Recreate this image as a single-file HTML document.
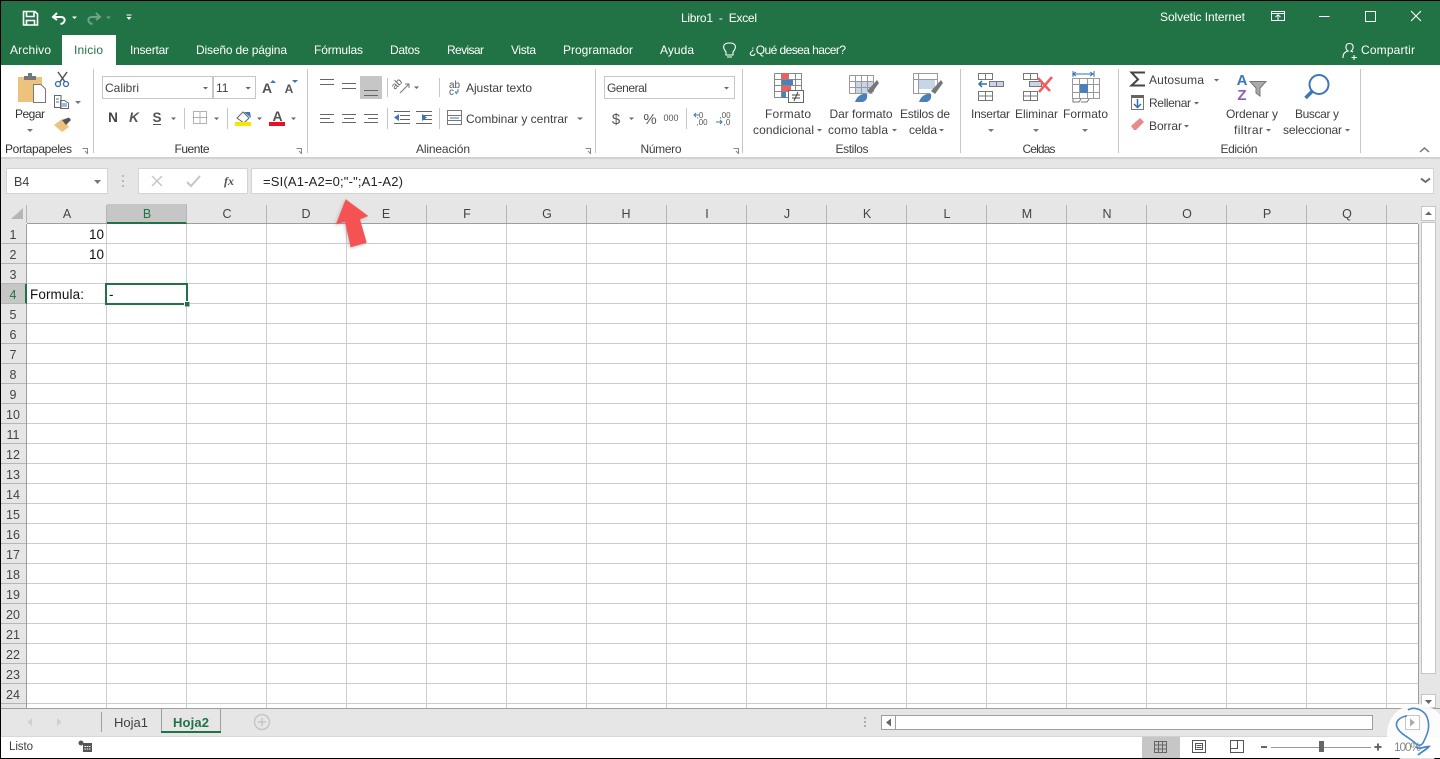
<!DOCTYPE html>
<html><head><meta charset="utf-8"><title>Libro1 - Excel</title>
<style>
html,body{margin:0;padding:0;background:#fff;overflow:hidden}
svg{display:block;position:absolute;left:0;top:0}
text{font-family:"Liberation Sans",sans-serif;font-size:12px;fill:#3f3f3f}
.c{text-anchor:middle}
.r{text-anchor:end}
.h{fill:#444;font-size:12.5px;text-anchor:middle}
.d{fill:#111;font-size:13.5px}
</style></head><body>
<svg width="1440" height="759" viewBox="0 0 1440 759" xmlns="http://www.w3.org/2000/svg">
<defs>
<pattern id="g" x="27" y="224" width="80" height="20" patternUnits="userSpaceOnUse"><path d="M79.500 0V20M0 19.500H80" stroke="#cdcdcd" fill="none"/></pattern>
<filter id="sh" x="-30%" y="-30%" width="160%" height="160%"><feGaussianBlur stdDeviation="1.5"/></filter>
</defs>
<rect width="1440" height="759" fill="#fff"/>
<!-- title bar -->
<rect x="0" y="0" width="1440" height="65" fill="#217346"/>
<rect x="0" y="0" width="1440" height="1" fill="#000"/>
<rect x="62" y="35" width="54" height="31" fill="#fff"/>
<!-- QAT -->
<path d="M23.500 11.500H35L37.500 14V25H23.500Z M26.500 12V16.500H34V12 M26.500 25V20.500H34.500V25" fill="none" stroke="#fff" stroke-width="1.600"/>
<path d="M57 13L53 17L57 20 M53.500 17H61C66 17 66 23 60.500 24" fill="none" stroke="#fff" stroke-width="2"/>
<path d="M72 16.500H77L74.500 19Z" fill="#fff"/>
<path d="M96 13L100 17L96 20 M99.500 17H92C87 17 87 23 92.500 24" fill="none" stroke="#6ea489" stroke-width="2"/>
<path d="M106 16.500H111L108.500 19Z" fill="#6ea489"/>
<path d="M126.500 14.500H131.500V15.500H126.500Z M126.500 17H131.500L129 20Z" fill="#fff"/>
<text x="681" y="22" style="fill:#fff" textLength="76">Libro1 &#160;-&#160; Excel</text>
<text x="1160" y="21" style="fill:#fff" textLength="85">Solvetic Internet</text>
<path d="M1271.500 11.500H1284.500V20.500H1271.500ZM1271.500 13.500H1284.500M1278 20V15M1275.500 17L1278 14.800L1280.500 17" fill="none" stroke="#fff"/>
<rect x="1319" y="16" width="10.500" height="1" fill="#fff"/>
<rect x="1365.500" y="11.500" width="10" height="10" fill="none" stroke="#fff"/>
<path d="M1411 11L1421 21M1421 11L1411 21" stroke="#fff" stroke-width="1.100"/>
<!-- tabs -->
<text x="10" y="54" style="fill:#fff" textLength="41">Archivo</text>
<text x="74" y="54" style="fill:#217346" textLength="29">Inicio</text>
<text x="130" y="54" style="fill:#fff" textLength="39">Insertar</text>
<text x="196" y="54" style="fill:#fff" textLength="91">Diseño de página</text>
<text x="314" y="54" style="fill:#fff" textLength="49">Fórmulas</text>
<text x="390" y="54" style="fill:#fff" textLength="30">Datos</text>
<text x="447" y="54" style="fill:#fff" textLength="37">Revisar</text>
<text x="511" y="54" style="fill:#fff" textLength="25">Vista</text>
<text x="563" y="54" style="fill:#fff" textLength="70">Programador</text>
<text x="660" y="54" style="fill:#fff" textLength="34">Ayuda</text>
<text x="749" y="54" style="fill:#fff" textLength="97">¿Qué desea hacer?</text>
<text x="1361" y="54" style="fill:#fff" textLength="54">Compartir</text>
<path d="M726 52C722 47 723 43 729.500 43C736 43 737 47 733 52V55H726ZM727 57H732" fill="none" stroke="#fff" stroke-width="1.100"/>
<path d="M1343 58C1343 53 1345 52 1348 51C1345 49 1345 43.500 1349.500 43.500C1354 43.500 1354 49 1351 51L1353 52M1354 55V60M1351.500 57.500H1357" fill="none" stroke="#fff" stroke-width="1.100"/>
<!-- ribbon -->
<rect x="0" y="65" width="1440" height="92" fill="#fff"/>
<rect x="0" y="157" width="1440" height="2" fill="#d2d2d2"/>
<path d="M93.500 69V153M307.500 69V153M595.500 69V153M742.500 69V153M960.500 69V153M1118.500 69V153M1360.500 69V153" stroke="#c6c6c6"/>
<!-- clipboard -->
<path d="M18 77H42V102H18Z" fill="#edc27d"/>
<path d="M24 76H36V80H24ZM28 73H32V76H28Z" fill="#777"/>
<path d="M33.500 84.500H41L45.500 89V102.500H33.500Z" fill="#fff" stroke="#777"/>
<text x="30" y="118" class="c" style="fill:#333" textLength="30">Pegar</text>
<path d="M27 129H33L30 132Z" fill="#777"/>
<!-- scissors -->
<path d="M58 72L65 82M67 72L60 82" stroke="#555" stroke-width="1.500"/>
<circle cx="58" cy="84" r="2.500" fill="none" stroke="#2f6fb0" stroke-width="1.300"/><circle cx="66" cy="84" r="2.500" fill="none" stroke="#2f6fb0" stroke-width="1.300"/>
<!-- copy -->
<path d="M54.500 95.500H61V107.500H54.500ZM60.500 100.500H64.500L68.500 103V108.500H60.500Z" fill="#fff" stroke="#666"/>
<path d="M56 99H59M56 102H59M62 104H67M62 106H67" stroke="#3b78b5"/>
<path d="M75 101H81L78 104Z" fill="#777"/>
<!-- brush -->
<path d="M54 125L62 119L69 127L62 132Z" fill="#edc27d"/>
<path d="M62 120L69 117.500L71 120L66 125Z" fill="#555"/>
<!-- font -->
<rect x="102.500" y="76.500" width="110" height="22" fill="#fff" stroke="#c6c6c6"/>
<rect x="213.500" y="76.500" width="42" height="22" fill="#fff" stroke="#c6c6c6"/>
<text x="105" y="92" textLength="34">Calibri</text><text x="216" y="92">11</text>
<path d="M203 87H208L205.500 89.500ZM245.500 87H251L248 89.500Z" fill="#666"/>
<text x="267" y="93" class="c" style="font-size:14px;font-weight:700;fill:#555">A</text>
<path d="M270 83H276L273 80Z" fill="#3b78b5"/>
<text x="289" y="93" class="c" style="font-size:12px;font-weight:700;fill:#555">A</text>
<path d="M292 80H298L295 83Z" fill="#3b78b5"/>
<text x="113" y="122" class="c" style="font-weight:700;fill:#444;font-size:13.500px">N</text>
<text x="134" y="122" class="c" style="font-weight:700;font-style:italic;fill:#555;font-size:13.500px">K</text>
<text x="157" y="122" class="c" style="font-weight:700;fill:#555;font-size:13.500px">S</text>
<rect x="153" y="124" width="8" height="1" fill="#555"/>
<path d="M171 117.500H176L173.500 120ZM214 117.500H219L216.500 120ZM257 117.500H262L259.500 120ZM291 117.500H296L293.500 120Z" fill="#666"/>
<path d="M184.500 108V129" stroke="#c6c6c6"/><path d="M227.500 108V129" stroke="#c6c6c6"/>
<path d="M193.500 111.500H206.500V123.500H193.500ZM200 111.500V123.500M193.500 117.500H206.500" fill="none" stroke="#666" stroke-dasharray="1 1"/>
<path d="M237 118L243 112L249 118L244 123Z" fill="#fff" stroke="#666"/><path d="M244 112L250 112L251 118Z" fill="#3b78b5"/>
<rect x="235" y="122" width="16" height="4" fill="#f5e800"/>
<text x="277.500" y="121" class="c" style="font-size:14px;font-weight:700;fill:#555">A</text>
<rect x="269" y="122" width="16" height="4" fill="#e81123"/>
<!-- alignment -->
<rect x="360" y="76" width="22" height="23" fill="#c6c6c6"/>
<path d="M320 79.500H334M320 84.500H334M342 83.500H356M342 88.500H356M364 90.500H378M364 95.500H378M320 114.500H334M320 118.500H330M320 122.500H334M342 114.500H356M344 118.500H354M342 122.500H356M364 114.500H378M368 118.500H378M364 122.500H378" stroke="#666" fill="none"/>
<path d="M387.500 78V97M387.500 108V129" stroke="#c6c6c6"/>
<text x="395" y="90" transform="rotate(-45 395 90)" style="font-size:10px;fill:#555">ab</text>
<path d="M400 93L409 84M405 84H409V88" stroke="#777" fill="none"/>
<path d="M414 86.500H419L416.500 89Z" fill="#666"/>
<path d="M394 111.500H410M400 115.500H410M400 119.500H410M394 123.500H410M416 111.500H432M422 115.500H432M422 119.500H432M416 123.500H432" stroke="#666" fill="none"/>
<path d="M394 117.500L399 114V121ZM422 114L427 117.500L422 121Z" fill="#3b78b5"/>
<path d="M439.500 78V97M439.500 108V129" stroke="#c6c6c6"/>
<text x="449" y="88" style="font-size:10px;fill:#555">ab</text>
<text x="449" y="95" style="font-size:10px;fill:#555">c</text>
<path d="M455 92H458V89M457 94L455 92" stroke="#3b78b5" fill="none"/>
<text x="466" y="92" textLength="66">Ajustar texto</text>
<path d="M447.500 110.500H461.500V124.500H447.500ZM447.500 115.500H461.500M447.500 120.500H461.500" fill="none" stroke="#777"/>
<path d="M450 118H459" stroke="#3b78b5"/>
<text x="466" y="123" textLength="102">Combinar y centrar</text>
<path d="M577 117.500H583L580 120Z" fill="#666"/>
<text x="443" y="153" class="c" textLength="54">Alineación</text>
<path d="M585.500 148.500H590.500V153.500M588 151L591 154" stroke="#888" fill="none"/>
<!-- Numero -->
<rect x="604.500" y="76.500" width="130" height="22" fill="#fff" stroke="#c6c6c6"/>
<text x="607" y="92" textLength="40">General</text>
<path d="M724 87H729L726.500 89.500Z" fill="#666"/>
<text x="616" y="124" class="c" style="font-size:15px;fill:#555">$</text>
<path d="M629 117.500H634L631.500 120Z" fill="#666"/>
<text x="650" y="124" class="c" style="font-size:15px;fill:#555">%</text>
<text x="671" y="121" class="c" style="font-size:9px;fill:#555">000</text>
<path d="M686.500 108V129" stroke="#c6c6c6"/>
<text x="700" y="118" class="c" style="font-size:8px;fill:#555">,0</text><text x="702" y="125" class="c" style="font-size:8px;fill:#555">,00</text>
<text x="725" y="118" class="c" style="font-size:8px;fill:#555">,00</text><text x="727" y="125" class="c" style="font-size:8px;fill:#555">,0</text>
<path d="M694 115H699M696 113L694 115L696 117" stroke="#3b78b5" fill="none"/>
<path d="M716 122H722M720 120L722 122L720 124" stroke="#3b78b5" fill="none"/>
<text x="661" y="153" class="c" textLength="41">Número</text>
<path d="M733.500 148.500H738.500V153.500M736 151L739 154" stroke="#888" fill="none"/>
<path d="M82.500 148.500H87.500V153.500M85 151L88 154" stroke="#888" fill="none"/>
<path d="M296.500 148.500H301.500V153.500M299 151L302 154" stroke="#888" fill="none"/>
<!-- Estilos -->
<path d="M774.500 73.500H801.500V93M774.500 73.500V97.500H788M781.500 73.500V97.500M788.500 73.500V90M795.500 73.500V90M774.500 79.500H801.500M774.500 85.500H801.500M774.500 91.500H788" fill="none" stroke="#888"/>
<rect x="782" y="73" width="6" height="6" fill="#f45c5c"/>
<rect x="782" y="80" width="11" height="5" fill="#4b80ba"/>
<rect x="782" y="86" width="9" height="5" fill="#f45c5c"/>
<rect x="782" y="92" width="4" height="6" fill="#4b80ba"/>
<rect x="788.500" y="90.500" width="15" height="12" fill="#fff" stroke="#666"/>
<path d="M792 95H800M792 98H800M794 101L798 92" stroke="#444" fill="none"/>
<text x="788" y="118" class="c" textLength="46">Formato</text>
<text x="753" y="134" textLength="61">condicional</text>
<path d="M817 129H822L819.500 131.500ZM892 129H897L894.500 131.500ZM939 129H944L941.500 131.500Z" fill="#666"/>
<rect x="856" y="81" width="17" height="13" fill="#c6d5e8"/>
<path d="M849.500 75.500H873.500V92M849.500 75.500V93.500H866M849.500 81.500H873.500M849.500 87.500H870M855.500 75.500V93.500M861.500 75.500V93.500M867.500 75.500V90" fill="none" stroke="#999"/>
<path d="M867 91L877 80L879 83L871 94Z" fill="#777"/>
<path d="M855 102C857 96 862 93 867 94C868 98 866 101 863 102Z" fill="#4b80ba"/>
<text x="861" y="118" class="c" textLength="63">Dar formato</text>
<text x="828" y="134" textLength="60">como tabla</text>
<rect x="918" y="79" width="17" height="10" fill="#c6d5e8"/>
<path d="M913.500 73.500H937.500V90M913.500 73.500V93.500H930M913.500 79.500H937.500M918.500 73.500V93.500" fill="none" stroke="#999"/>
<path d="M931 91L941 80L943 83L935 94Z" fill="#777"/>
<path d="M919 102C921 96 926 93 931 94C932 98 930 101 927 102Z" fill="#4b80ba"/>
<text x="925" y="118" class="c" textLength="50">Estilos de</text>
<text x="909" y="134" textLength="28">celda</text>
<text x="852" y="153" class="c" textLength="33">Estilos</text>
<!-- Celdas -->
<path d="M978.500 73.500H992.500V79.500H978.500ZM985.500 73.500V79.500M978.500 91.500H992.500V100.500H978.500ZM985.500 91.500V100.500M978.500 96H992.500" fill="none" stroke="#777"/>
<path d="M989.500 81.500H1003.500V86.500H989.500ZM996.500 81.500V86.500" fill="#c6d5e8" stroke="#777"/>
<path d="M979 84H987M982 81L979 84L982 87" stroke="#2f6fb0" stroke-width="1.500" fill="none"/>
<text x="971" y="118" textLength="39">Insertar</text>
<path d="M1023.500 73.500H1037.500V79.500H1023.500ZM1030.500 73.500V79.500M1023.500 91.500H1037.500V100.500H1023.500ZM1030.500 91.500V100.500M1023.500 96H1037.500" fill="none" stroke="#777"/>
<path d="M1029.500 81.500H1041.500V86.500H1029.500Z" fill="#c6d5e8" stroke="#777"/>
<path d="M1038 78L1050 91M1052 77L1039 92" stroke="#f45c5c" stroke-width="2.500"/>
<text x="1015" y="118" textLength="43">Eliminar</text>
<path d="M1073 74H1093M1073 71V77M1094 71V77M1076 72L1073 74L1076 76M1090 72L1093 74L1090 76" stroke="#2f6fb0" fill="none"/>
<path d="M1072.500 78.500H1099.500V98.500H1072.500ZM1072.500 84.500H1099.500M1072.500 92.500H1099.500M1079.500 78.500V98.500M1087.500 78.500V98.500M1093.500 78.500V98.500" fill="none" stroke="#999"/>
<rect x="1080" y="84" width="8" height="9" fill="#4b80ba"/>
<path d="M1073 99V102H1079L1081 99M1081 102H1087L1089 99" fill="none" stroke="#777"/>
<text x="1063" y="118" textLength="45">Formato</text>
<path d="M988 129H994L991 132ZM1033 129H1039L1036 132ZM1082 129H1088L1085 132Z" fill="#777"/>
<text x="1039" y="153" class="c" textLength="33">Celdas</text>
<!-- Edicion -->
<path d="M1145 72.500H1131.500L1138 79.500L1131.500 85.500H1145" fill="none" stroke="#444" stroke-width="2"/>
<text x="1149" y="84" textLength="55">Autosuma</text>
<path d="M1214 79H1219L1216.500 81.500Z" fill="#666"/>
<rect x="1131.500" y="95.500" width="12" height="14" fill="#fff" stroke="#777"/><rect x="1131" y="95" width="13" height="3" fill="#666"/>
<path d="M1137.500 99V107M1134 104L1137.500 107.500L1141 104" stroke="#2f6fb0" stroke-width="1.500" fill="none"/>
<text x="1149" y="107" textLength="42">Rellenar</text>
<path d="M1194 102H1199L1196.500 104.500ZM1184 125H1189L1186.500 127.500Z" fill="#666"/>
<path d="M1131 126L1140 118L1144 122L1136 130H1134Z" fill="#e88a8a"/>
<text x="1149" y="130" textLength="33">Borrar</text>
<text x="1242" y="85" class="c" style="font-size:15px;font-weight:700;fill:#3b78b5">A</text>
<text x="1242" y="100" class="c" style="font-size:15px;font-weight:700;fill:#8a5fb5">Z</text>
<path d="M1250 81.500H1266L1260 88V96L1256 93V88Z" fill="#aaa" stroke="#777"/>
<text x="1252" y="118" class="c" textLength="52">Ordenar y</text>
<text x="1234" y="134" textLength="29">filtrar</text>
<path d="M1266 129H1271L1268.500 131.500ZM1345 129H1350L1347.500 131.500Z" fill="#666"/>
<circle cx="1319" cy="84.500" r="9.500" fill="none" stroke="#3b78b5" stroke-width="2"/>
<path d="M1312 91.500L1305.500 98" stroke="#3b78b5" stroke-width="3.500"/>
<text x="1317" y="118" class="c" textLength="44">Buscar y</text>
<text x="1283" y="134" textLength="59">seleccionar</text>
<text x="1239" y="153" class="c" textLength="37">Edición</text>
<text x="38.500" y="153" class="c" textLength="67" style="fill:#333">Portapapeles</text>
<text x="192" y="153" class="c" textLength="35" style="fill:#333">Fuente</text>
<path d="M1420 152L1424.500 148L1429 152" fill="none" stroke="#777" stroke-width="1.500"/>
<!-- formula bar -->
<rect x="0" y="159" width="1440" height="45" fill="#e6e6e6"/>
<rect x="6.500" y="168.500" width="101" height="25" fill="#fff" stroke="#d4d4d4"/>
<text x="14" y="186" style="font-size:12.500px">B4</text>
<path d="M94 180H101L97.500 184Z" fill="#777"/>
<path d="M123 175V177M123 180V182M123 185V187" stroke="#aaa" stroke-width="1.500"/>
<rect x="138.500" y="168.500" width="109" height="25" fill="#fff" stroke="#d4d4d4"/>
<path d="M152 176L162 186M162 176L152 186" stroke="#c6c6c6" stroke-width="1.500"/>
<path d="M187 182L191 186L200 176" stroke="#c6c6c6" stroke-width="2" fill="none"/>
<text x="229" y="185" class="c" style="font-family:'Liberation Serif',serif;font-style:italic;font-weight:700;font-size:12px;fill:#555">fx</text>
<rect x="251.500" y="168.500" width="1182" height="25" fill="#fff" stroke="#d4d4d4"/>
<text x="263" y="186" style="font-size:13px;fill:#222" textLength="140">=SI(A1-A2=0;"-";A1-A2)</text>
<path d="M1421 178.500L1425.500 182L1430 178.500" fill="none" stroke="#666" stroke-width="1.800"/>
<!-- grid -->
<rect x="1" y="204" width="1439" height="504" fill="#fff"/>
<rect x="27" y="224" width="1391" height="484" fill="url(#g)"/>
<!-- col headers -->
<rect x="1" y="204" width="1418" height="19" fill="#e6e6e6"/>
<rect x="107" y="204" width="80" height="18" fill="#c6c6c6"/>
<rect x="107" y="222" width="80" height="2" fill="#217346"/>
<rect x="27" y="223" width="80" height="1" fill="#9e9e9e"/><rect x="187" y="223" width="1231" height="1" fill="#9e9e9e"/>
<path d="M26.500 205V223M106.500 205V223M186.500 205V223M266.500 205V223M346.500 205V223M426.500 205V223M506.500 205V223M586.500 205V223M666.500 205V223M746.500 205V223M826.500 205V223M906.500 205V223M986.500 205V223M1066.500 205V223M1146.500 205V223M1226.500 205V223M1306.500 205V223M1386.500 205V223" stroke="#b5b5b5"/>
<path d="M23 208V219H11Z" fill="#b5b5b5"/>
<text class="h" x="67" y="218">A</text><text class="h" x="147" y="218" style="fill:#217346">B</text><text class="h" x="227" y="218">C</text><text class="h" x="306" y="218">D</text><text class="h" x="386" y="218">E</text><text class="h" x="467" y="218">F</text><text class="h" x="547" y="218">G</text><text class="h" x="626" y="218">H</text><text class="h" x="707" y="218">I</text><text class="h" x="787" y="218">J</text><text class="h" x="867" y="218">K</text><text class="h" x="947" y="218">L</text><text class="h" x="1027" y="218">M</text><text class="h" x="1107" y="218">N</text><text class="h" x="1187" y="218">O</text><text class="h" x="1267" y="218">P</text><text class="h" x="1347" y="218">Q</text>
<!-- row headers -->
<rect x="1" y="223" width="25" height="485" fill="#e6e6e6"/>
<rect x="1" y="284" width="25" height="20" fill="#c6c6c6"/>
<rect x="25" y="284" width="2" height="20" fill="#217346"/>
<rect x="26" y="224" width="1" height="60" fill="#9e9e9e"/><rect x="26" y="304" width="1" height="404" fill="#9e9e9e"/>
<path d="M1 243.500H26M1 263.500H26M1 283.500H26M1 303.500H26M1 323.500H26M1 343.500H26M1 363.500H26M1 383.500H26M1 403.500H26M1 423.500H26M1 443.500H26M1 463.500H26M1 483.500H26M1 503.500H26M1 523.500H26M1 543.500H26M1 563.500H26M1 583.500H26M1 603.500H26M1 623.500H26M1 643.500H26M1 663.500H26M1 683.500H26M1 703.500H26" stroke="#b5b5b5"/>
<text class="h" x="13" y="239">1</text><text class="h" x="13" y="259">2</text><text class="h" x="13" y="279">3</text><text class="h" x="13" y="299" style="fill:#217346">4</text><text class="h" x="13" y="319">5</text><text class="h" x="13" y="339">6</text><text class="h" x="13" y="359">7</text><text class="h" x="13" y="379">8</text><text class="h" x="13" y="399">9</text><text class="h" x="13" y="419">10</text><text class="h" x="13" y="439">11</text><text class="h" x="13" y="459">12</text><text class="h" x="13" y="479">13</text><text class="h" x="13" y="499">14</text><text class="h" x="13" y="519">15</text><text class="h" x="13" y="539">16</text><text class="h" x="13" y="559">17</text><text class="h" x="13" y="579">18</text><text class="h" x="13" y="599">19</text><text class="h" x="13" y="619">20</text><text class="h" x="13" y="639">21</text><text class="h" x="13" y="659">22</text><text class="h" x="13" y="679">23</text><text class="h" x="13" y="699">24</text>
<!-- cells -->
<text class="d r" x="104" y="239">10</text>
<text class="d r" x="104" y="259">10</text>
<text class="d" x="30" y="299" textLength="54">Formula:</text>
<text class="d" x="109" y="299">-</text>
<rect x="106" y="284" width="81" height="20" fill="none" stroke="#217346" stroke-width="2"/>
<rect x="184" y="301" width="6" height="6" fill="#fff"/>
<rect x="185" y="302" width="4.500" height="4.500" fill="#217346"/>
<!-- v scroll -->
<rect x="1418" y="204" width="22" height="504" fill="#e6e6e6"/>
<rect x="1418" y="224" width="1" height="484" fill="#9e9e9e"/>
<rect x="1421.500" y="206.500" width="14" height="14" fill="#fff" stroke="#c6c6c6"/>
<path d="M1425 215H1432L1428.500 211.500Z" fill="#666"/>
<rect x="1421.500" y="222.500" width="14" height="451" fill="#fff" stroke="#c6c6c6"/>
<rect x="1421.500" y="694.500" width="14" height="13" fill="#fff" stroke="#c6c6c6"/>
<path d="M1425 700H1432L1428.500 704Z" fill="#666"/>
<!-- sheet bar -->
<rect x="1" y="708" width="1439" height="28" fill="#e6e6e6"/>
<rect x="1" y="708" width="1439" height="1" fill="#9e9e9e"/>
<path d="M32 718V726L27.500 722ZM57 718V726L61.500 722Z" fill="#d0d0d0"/>
<path d="M101.500 712V732" stroke="#9e9e9e"/>
<text x="114" y="727" style="font-size:13px" textLength="34">Hoja1</text>
<path d="M161.500 709V731M220.500 709V731" stroke="#9e9e9e"/>
<rect x="162" y="709" width="58" height="22" fill="#e6e6e6"/>
<rect x="161" y="731" width="60" height="2" fill="#217346"/>
<text x="173" y="727" style="font-size:13px;font-weight:700;fill:#217346" textLength="36">Hoja2</text>
<circle cx="262" cy="722" r="7.500" fill="none" stroke="#c6c6c6" stroke-width="1.500"/>
<path d="M258 722H266M262 718V726" stroke="#c6c6c6" stroke-width="1.500"/>
<path d="M865 717V719M865 721V723M865 725V727" stroke="#999" stroke-width="1.500"/>
<rect x="881.500" y="715.500" width="14" height="14" fill="#fff" stroke="#9e9e9e"/>
<path d="M891 718.500V726.500L886 722.500Z" fill="#666"/>
<rect x="895.500" y="715.500" width="477" height="14" fill="#fff" stroke="#9e9e9e"/>
<!-- status -->
<rect x="0" y="736" width="1440" height="22" fill="#fff"/>
<rect x="0" y="736" width="1440" height="1" fill="#d8d8d8"/>
<rect x="0" y="758" width="1440" height="1" fill="#000"/>
<rect x="0" y="0" width="1" height="759" fill="#000"/>
<text x="9" y="750" textLength="24" style="font-size:11.500px">Listo</text>
<circle cx="81" cy="743" r="2.500" fill="#555"/>
<rect x="83" y="743" width="9" height="9" fill="#555"/>
<path d="M84.500 746.500H91M84.500 749H91" stroke="#fff" stroke-dasharray="1.500 .7"/>
<rect x="1142" y="736.500" width="38" height="21.500" fill="#c6c6c6"/>
<path d="M1154.500 741.500H1166.500V752.500H1154.500ZM1154.500 745H1166.500M1154.500 749H1166.500M1158.500 741.500V752.500M1162.500 741.500V752.500" fill="none" stroke="#666"/>
<path d="M1192.500 740.500H1205.500V752.500H1192.500ZM1195.500 743.500H1202.500V749.500H1195.500ZM1196.500 745.500H1201.500M1196.500 747.500H1201.500" fill="none" stroke="#555"/>
<path d="M1230.500 740.500H1243.500V752.500H1230.500ZM1231 748.500H1237.500V741" fill="none" stroke="#555"/>
<rect x="1261" y="746" width="6" height="2" fill="#666"/>
<rect x="1271" y="747" width="100" height="1" fill="#999"/>
<rect x="1319" y="741" width="5" height="11" fill="#666"/>
<path d="M1374.500 747H1381.500M1378 743.500V750.500" stroke="#666" stroke-width="2"/>
<!-- arrow -->
<polygon points="345.700,199.300 368.300,216 360,219.300 366.700,242.700 350.700,247.300 345,221.700 336,224.300" fill="#777" opacity=".45" filter="url(#sh)" transform="translate(-1,1)"/>
<polygon points="345.700,199.300 368.300,216 360,219.300 366.700,242.700 350.700,247.300 345,221.700 336,224.300" fill="#f55353"/>
<!-- watermark -->
<circle cx="1417" cy="734" r="30" fill="#fff" opacity=".88"/>
<rect x="1405.500" y="715.500" width="14" height="14" fill="#fff" stroke="#c6c6c6"/>
<path d="M1410 718.500V726.500L1415 722.500Z" fill="#aaa"/>
<text x="1394" y="751" style="font-size:12px;fill:#888" textLength="27">100%</text>
<path d="M1407 716C1399 717 1395 722 1397 727C1399 733 1408 737 1414 742C1417 745 1420 747 1423 743C1427 735 1431 727 1427 717C1424 710 1414 706 1408 710" fill="none" stroke="#4a86c5" stroke-width="1.600"/>
<path d="M1416 747C1420 750 1425 746 1429 746.500C1426 750 1421 752 1418 755" fill="none" stroke="#4a86c5" stroke-width="1.800"/>
</svg>
</body></html>
